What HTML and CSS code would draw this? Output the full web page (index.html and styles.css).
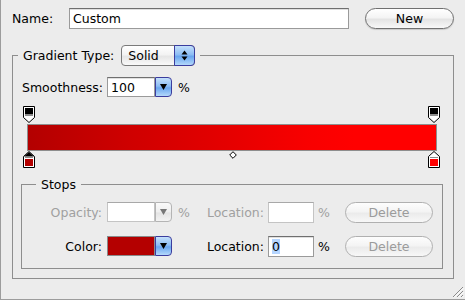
FILE: index.html
```html
<!DOCTYPE html>
<html lang="en">
<head>
  <meta charset="UTF-8" />
  <title>Gradient Editor</title>
  <link rel="stylesheet" href="styles.css">
</head>
<body>
  <div class="window">
    <div class="name-row">
      <span class="name-label">Name:</span>
      <span class="field name-field">Custom</span>
      <span class="pill new-btn">New</span>
    </div>

    <fieldset class="group outer">
      <legend class="outer-legend">
        <span>Gradient Type:</span>
        <span class="popup">Solid
          <span class="popup-btn">
            <svg width="7" height="11" viewBox="0 0 7 11"><path d="M3.5 0.5L6.5 4.5H0.5Z M0.5 6.5H6.5L3.5 10.5Z" fill="#000"/></svg>
          </span>
        </span>
      </legend>

      <div class="smooth-row">
        <span class="smooth-label">Smoothness:</span>
        <span class="combo">
          <span class="field combo-field">100</span>
          <span class="combo-btn"><svg width="7" height="6" viewBox="0 0 7 6"><path d="M0 0H7L3.5 6Z" fill="#000"/></svg></span>
        </span>
        <span class="pct">%</span>
      </div>

      <!-- gradient ramp with opacity stops above and color stops below -->
      <div class="ramp">
        <div class="ramp-top">
          <svg class="stop stop-left" width="12" height="17" viewBox="0 0 12 17">
            <path d="M0.5 0.5H11.5V11.5L6 16.5L0.5 11.5Z" fill="#fff" stroke="#000"/>
            <rect x="2" y="2" width="8" height="6" fill="#000"/>
            <rect x="2" y="8" width="8" height="2" fill="#8c8c8c"/>
          </svg>
          <svg class="stop stop-right" width="12" height="17" viewBox="0 0 12 17">
            <path d="M0.5 0.5H11.5V11.5L6 16.5L0.5 11.5Z" fill="#fff" stroke="#000"/>
            <rect x="2" y="2" width="8" height="6" fill="#000"/>
            <rect x="2" y="8" width="8" height="2" fill="#8c8c8c"/>
          </svg>
        </div>
        <div class="ramp-bar"></div>
        <div class="ramp-bottom">
          <svg class="stop stop-left" width="12" height="17" viewBox="0 0 12 17">
            <path d="M6 0.5L11.5 5.5V16.5H0.5V5.5Z" fill="#fff" stroke="#000"/>
            <path d="M6 1L11 5.5H1Z" fill="#000"/>
            <rect x="2" y="6" width="8" height="1" fill="#8c8c8c"/>
            <rect x="2" y="8" width="8" height="7" fill="#b40000"/>
          </svg>
          <svg class="midpoint" width="8" height="8" viewBox="0 0 8 8">
            <path d="M4 0.7L7.3 4L4 7.3L0.7 4Z" fill="#fff" stroke="#000"/>
          </svg>
          <svg class="stop stop-right" width="12" height="17" viewBox="0 0 12 17">
            <path d="M6 0.5L11.5 5.5V16.5H0.5V5.5Z" fill="#fff" stroke="#000"/>
            <rect x="2" y="6" width="8" height="1" fill="#8c8c8c"/>
            <rect x="2" y="8" width="8" height="7" fill="#ff0000"/>
          </svg>
        </div>
      </div>

      <fieldset class="group stops">
        <legend class="stops-legend">Stops</legend>

        <div class="stop-row disabled">
          <span class="row-label">Opacity:</span>
          <span class="combo">
            <span class="field combo-field"></span>
            <span class="combo-btn gray"><svg width="7" height="6" viewBox="0 0 7 6"><path d="M0 0H7L3.5 6Z" fill="#777"/></svg></span>
          </span>
          <span class="pct">%</span>
          <span class="loc-label">Location:</span>
          <span class="field loc-field"></span>
          <span class="pct2">%</span>
          <span class="pill del-btn">Delete</span>
        </div>

        <div class="stop-row">
          <span class="row-label">Color:</span>
          <span class="combo">
            <span class="swatch"></span>
            <span class="combo-btn"><svg width="7" height="6" viewBox="0 0 7 6"><path d="M0 0H7L3.5 6Z" fill="#000"/></svg></span>
          </span>
          <span class="pct"></span>
          <span class="loc-label">Location:</span>
          <span class="field loc-field"><span class="sel">0</span></span>
          <span class="pct2">%</span>
          <span class="pill del-btn">Delete</span>
        </div>
      </fieldset>
    </fieldset>

    <svg class="grip" width="13" height="13" viewBox="0 0 13 13">
      <path d="M12 2L2 12M12 6L6 12M12 10L10 12" stroke="#8a8a8a" stroke-width="1"/>
      <path d="M12.5 3L3 12.5M12.5 7L7 12.5M12.5 11L11 12.5" stroke="#fff" stroke-width="1"/>
    </svg>
  </div>
</body>
</html>
```

FILE: styles.css
```css
* { box-sizing: border-box; }
html, body { margin: 0; }
body { font-family: "DejaVu Sans", sans-serif; font-size: 12.5px; line-height: 15px; color: #000; background: #ececec; }

.window { position: relative; width: 465px; height: 300px; border-left: 1px solid #9c9c9c; border-bottom: 1px solid #9c9c9c; }

/* name row */
.name-row { display: flex; align-items: center; padding: 7px 0 0 11px; }
.name-label { width: 57px; }
.field { display: block; height: 21px; padding: 2px 3px 0; background: #fff; border: 1px solid #9a9a9a; border-top-color: #6f6f6f; box-shadow: inset 0 1px 0 #e0e0e0; }
.name-field { width: 280px; }
.pill { display: flex; align-items: center; justify-content: center; height: 21px; border-radius: 11px; border: 1px solid #707070; background: linear-gradient(#ffffff, #f4f4f4 45%, #e4e4e4 55%, #f8f8f8); box-shadow: 0 1px 1px rgba(0,0,0,0.15); }
.new-btn { width: 89px; margin-left: 16px; margin-top: 1px; }

/* group boxes */
.group { margin: 0; padding: 0; border: 1px solid #8e8e8e; min-width: 0; }
.outer { margin: 16px 11px 0 11px; padding-bottom: 9px; }
.outer-legend { display: flex; align-items: center; gap: 7px; margin-left: 5px; padding: 0 5px; }
.popup { position: relative; display: flex; align-items: center; width: 74px; height: 21px; padding-left: 6px; border: 1px solid #7a7a7a; border-radius: 4px; background: linear-gradient(#ffffff, #f3f3f3 45%, #e6e6e6 55%, #f9f9f9); }
.popup-btn { position: absolute; top: -1px; right: -1px; bottom: -1px; width: 21px; display: flex; align-items: center; justify-content: center; border: 1px solid #3b3d9e; border-radius: 0 4px 4px 0; background: linear-gradient(#c4e0fb, #8dbdf4 45%, #6aa6ef 55%, #b3d8fb); }

/* smoothness */
.smooth-row { display: flex; align-items: center; margin-top: 11px; padding-left: 9px; }
.smooth-label { width: 85px; }
.combo { display: flex; height: 20px; }
.combo-field { width: 48px; height: 20px; padding-top: 2px; }
.combo-btn { width: 17px; height: 20px; display: flex; align-items: center; justify-content: center; border: 1px solid #3b3d9e; border-radius: 0 4px 4px 0; background: linear-gradient(#c4e0fb, #8dbdf4 45%, #6aa6ef 55%, #b3d8fb); }
.combo-btn.gray { border-color: #b4b4b4; background: linear-gradient(#fafafa, #efefef 50%, #e4e4e4 55%, #f3f3f3); }
.pct { width: 20px; padding-left: 6px; }

/* gradient ramp */
.ramp { width: 410px; margin: 9px 0 0 14px; }
.ramp-top, .ramp-bottom { position: relative; height: 17px; }
.ramp-bar { height: 27px; margin: 1px 0 0; border: 1px solid #8e8e8e; background: linear-gradient(to right, #b30000, #cf0000 25%, #e60000 50%, #f80000 68%, #ff0000 80%); }
.stop { position: absolute; top: 0; }
.stop-left { left: -4px; }
.stop-right { right: -3px; }
.midpoint { position: absolute; top: 0; left: 202px; }

/* stops box */
.stops { margin: 9px 10px 0 8px; padding: 10px 0 12px; }
.stops-legend { margin-left: 14px; padding: 0 5px; }
.stop-row { display: flex; align-items: center; height: 20px; }
.stop-row + .stop-row { margin-top: 14px; }
.row-label { width: 80px; margin-right: 5px; text-align: right; }
.swatch { display: block; width: 48px; height: 20px; background: #b40000; border: 1px solid #8a8a8a; }
.loc-label { width: 72px; margin-right: 4px; text-align: right; }
.loc-field { width: 46px; height: 21px; }
.pct2 { width: 31px; padding-left: 4px; }
.del-btn { width: 88px; color: #9b9b9b; border-color: #b0b0b0; background: linear-gradient(#fdfdfd, #f4f4f4 45%, #ebebeb 55%, #f8f8f8); box-shadow: none; }
.sel { background: #b5d5ff; }

.disabled { color: #a0a0a0; }
.disabled .field { border-color: #c4c4c4; border-top-color: #a8a8a8; box-shadow: none; }

.grip { position: absolute; right: 1px; bottom: 1px; }
```
